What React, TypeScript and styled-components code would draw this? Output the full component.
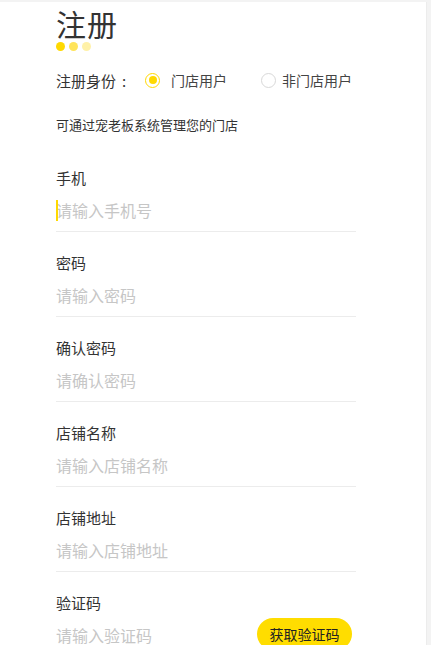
import React from "react";
import styled, { createGlobalStyle } from "styled-components";

const Global = createGlobalStyle`
  html, body { margin: 0; padding: 0; background: #f3f3f3; }
  body { font-family: "Noto Sans CJK SC", "Noto Sans", sans-serif; overflow: hidden; }
  * { box-sizing: border-box; }
`;

const Card = styled.div`
  margin-top: 2px;
  width: 427px;
  min-height: 700px;
  background: #fff;
  border-right: 1px solid #ececec;
  padding: 6px 0 0 56px;
`;

const Title = styled.h1`
  margin: 0;
  font-size: 30px;
  line-height: 30px;
  font-weight: 400;
  color: #333;
  letter-spacing: 1px;
`;

const Dots = styled.div`
  display: flex;
  gap: 4px;
  margin-top: 4px;
`;

const Dot = styled.span<{ $c: string }>`
  width: 9px;
  height: 9px;
  border-radius: 50%;
  background: ${(p) => p.$c};
`;

const RoleRow = styled.div`
  display: flex;
  align-items: center;
  margin-top: 19px;
  height: 20px;
`;

const RoleLabel = styled.span`
  font-size: 15px;
  color: #333;
  width: 89px;
`;

const Colon = styled.span`
  margin-left: 6px;
`;

const Option = styled.label`
  display: flex;
  align-items: center;
  font-size: 14px;
  color: #444;
  margin-right: 34px;
`;

const Radio = styled.span<{ $on?: boolean }>`
  width: 15px;
  height: 15px;
  border-radius: 50%;
  border: 1.5px solid ${(p) => (p.$on ? "#ffd900" : "#d8d8d8")};
  display: flex;
  align-items: center;
  justify-content: center;
  margin-right: ${(p) => (p.$on ? "11px" : "6px")};
  &::after {
    content: "";
    width: 8px;
    height: 8px;
    border-radius: 50%;
    background: ${(p) => (p.$on ? "#ffd900" : "transparent")};
  }
`;

const Desc = styled.p`
  margin: 26px 0 0;
  font-size: 13px;
  line-height: 18px;
  color: #333;
`;

const Form = styled.div`
  width: 300px;
  margin-top: 34px;
  display: flex;
  flex-direction: column;
  gap: 21px;
`;

const Field = styled.div<{ $last?: boolean }>`
  display: flex;
  flex-direction: column;
  border-bottom: ${(p) => (p.$last ? "none" : "1px solid #ececec")};
  padding-bottom: 5px;
`;

const Label = styled.div`
  font-size: 15px;
  line-height: 20px;
  color: #333;
`;

const InputRow = styled.div`
  position: relative;
  display: flex;
  align-items: center;
  margin-top: 6px;
  height: 32px;
`;

const Input = styled.input`
  flex: 1;
  border: none;
  outline: none;
  padding: 0;
  font-family: inherit;
  font-size: 16px;
  color: #333;
  background: transparent;
  &::placeholder { color: #c6c6c6; }
`;

const Caret = styled.span`
  position: absolute;
  left: 0;
  top: 6px;
  width: 1.5px;
  height: 21px;
  background: #ffd900;
`;

const CodeBtn = styled.button`
  width: 95px;
  height: 32px;
  border: none;
  border-radius: 16px;
  background: #ffdd00;
  color: #222;
  font-family: inherit;
  font-size: 14px;
  padding: 0;
  margin-right: 4px;
  margin-top: -2px;
`;

const fields = [
  { label: "手机", ph: "请输入手机号", caret: true },
  { label: "密码", ph: "请输入密码" },
  { label: "确认密码", ph: "请确认密码" },
  { label: "店铺名称", ph: "请输入店铺名称" },
  { label: "店铺地址", ph: "请输入店铺地址" },
];

export default function App() {
  return (
    <>
      <Global />
      <Card>
        <Title>注册</Title>
        <Dots>
          <Dot $c="#ffd900" />
          <Dot $c="#ffe45a" />
          <Dot $c="#fff1a8" />
        </Dots>
        <RoleRow>
          <RoleLabel>
            注册身份<Colon>:</Colon>
          </RoleLabel>
          <Option>
            <Radio $on />
            门店用户
          </Option>
          <Option>
            <Radio />
            非门店用户
          </Option>
        </RoleRow>
        <Desc>可通过宠老板系统管理您的门店</Desc>
        <Form>
          {fields.map((f) => (
            <Field key={f.label}>
              <Label>{f.label}</Label>
              <InputRow>
                {f.caret && <Caret />}
                <Input placeholder={f.ph} />
              </InputRow>
            </Field>
          ))}
          <Field $last>
            <Label>验证码</Label>
            <InputRow>
              <Input placeholder="请输入验证码" />
              <CodeBtn>获取验证码</CodeBtn>
            </InputRow>
          </Field>
        </Form>
      </Card>
    </>
  );
}
